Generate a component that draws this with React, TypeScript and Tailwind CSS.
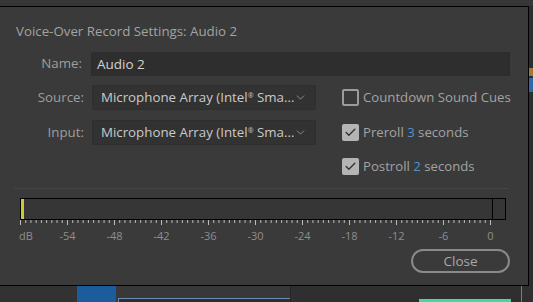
import { ChevronDown, Check } from 'lucide-react'

const font = { fontFamily: '"Open Sans", "Noto Sans", sans-serif' }

const dbLabels = ['dB', '-54', '-48', '-42', '-36', '-30', '-24', '-18', '-12', '-6', '0']

function Dropdown() {
  return (
    <div className="flex h-[25px] w-[224px] items-center justify-between rounded-[2px] border border-[#2e2e2e] bg-[#323232] pl-[8px] pr-[8px]">
      <span className="min-w-0 overflow-hidden whitespace-nowrap text-[13.3px] text-[#c9c9c9]">
        Microphone Array (Intel<sup className="text-[7px]">®</sup> Sma...
      </span>
      <ChevronDown size={13} strokeWidth={1.5} className="shrink-0 text-[#a0a0a0]" />
    </div>
  )
}

function CheckBox({ checked }: { checked: boolean }) {
  if (checked) {
    return (
      <div className="flex h-[17px] w-[17px] shrink-0 items-center justify-center rounded-[2px] bg-[#b4b4b4]">
        <Check size={13} strokeWidth={2.5} className="text-[#333333]" />
      </div>
    )
  }
  return <div className="h-[17px] w-[17px] shrink-0 rounded-[2px] border-2 border-[#9c9c9c]" />
}

function Meter() {
  const ticks = []
  for (let i = 0; i <= 90; i++) {
    const x = 1.5 + i * (470 / 90)
    const major = i % 9 === 0
    ticks.push(
      <line key={i} x1={x} x2={x} y1={0} y2={major ? 5 : 3} stroke="#bdbdbd" strokeWidth={1} />
    )
  }
  return (
    <div className="ml-[20px] flex flex-col">
      <div className="flex h-[22px] w-[486px] border border-black bg-[#363636]">
        <div className="w-[3px] bg-[#c9c93c]" />
        <div className="flex-1" />
        <div className="w-[13px] border-l border-black" />
      </div>
      <svg width="500" height="24" className="-ml-[1px]">
        {ticks}
        {dbLabels.map((l, i) => (
          <text
            key={l}
            x={i === 0 ? 7 : 1.5 + i * 47}
            y={20}
            textAnchor="middle"
            fontSize="11"
            fill="#8e8e8e"
            style={font}
          >
            {l}
          </text>
        ))}
      </svg>
    </div>
  )
}

export default function App() {
  return (
    <div className="flex h-[302px] w-[533px] flex-col overflow-hidden bg-[#2c2c2c]" style={font}>
      <div className="h-[6px] shrink-0 bg-[#363636]" />
      <div className="flex h-[280px] shrink-0">
        {/* dialog */}
        <div className="flex w-[529px] flex-col border-y border-r border-black bg-[#3a3a3a] pl-[16px] pr-[18px] pt-[16px]">
          <div className="h-[17px] whitespace-nowrap text-[13.3px] leading-[17px] text-[#a3a3a3]">
            Voice-Over Record Settings: Audio 2
          </div>

          <div className="mt-[12px] flex items-center">
            <div className="w-[68px] pr-[2px] text-right text-[13.3px] text-[#9e9e9e]">Name:</div>
            <div className="ml-[7px] flex h-[24px] flex-1 items-center rounded-[2px] border border-[#2c2c2c] bg-[#2e2e2e] pl-[5px] text-[13.5px] text-[#d2d2d2]">
              Audio 2
            </div>
          </div>

          <div className="mt-[9px] flex">
            <div className="flex flex-col gap-[10px]">
              <div className="flex items-center">
                <div className="w-[68px] text-right text-[13.3px] text-[#9e9e9e]">Source:</div>
                <div className="ml-[8px]">
                  <Dropdown />
                </div>
              </div>
              <div className="flex items-center">
                <div className="w-[68px] text-right text-[13.3px] text-[#9e9e9e]">Input:</div>
                <div className="ml-[8px]">
                  <Dropdown />
                </div>
              </div>
            </div>

            <div className="ml-[26px] flex flex-col whitespace-nowrap text-[13.2px] text-[#a3a3a3]">
              <div className="flex h-[25px] items-center gap-[4px]">
                <CheckBox checked={false} />
                <span>Countdown Sound Cues</span>
              </div>
              <div className="mt-[10px] flex h-[25px] items-center gap-[4px]">
                <CheckBox checked />
                <span>
                  Preroll <span className="text-[#4f93d6]">3</span> seconds
                </span>
              </div>
              <div className="mt-[9px] flex h-[25px] items-center gap-[4px]">
                <CheckBox checked />
                <span>
                  Postroll <span className="text-[#4f93d6]">2</span> seconds
                </span>
              </div>
            </div>
          </div>

          <div className="-ml-[2px] mt-[9px] h-px w-[494px] bg-[#464646]" />

          <div className="-ml-[16px] mt-[9px]">
            <Meter />
          </div>

          <div className="mt-[5px] flex justify-end">
            <div className="flex h-[24px] w-[99px] items-center justify-center rounded-full border-2 border-[#8a8a8a] text-[13.5px] text-[#a9a9a9]">
              Close
            </div>
          </div>
        </div>
        {/* right edge of the app behind */}
        <div className="flex flex-1 flex-col bg-[#2e2e2e]">
          <div className="mt-[62px] h-[8px] bg-[#a0783a]" />
          <div className="mt-[2px] h-[14px] bg-[#2f6aa8]" />
        </div>
      </div>
      {/* app strip behind the dialog */}
      <div className="flex flex-1">
        <div className="w-[77px] bg-[#323232]" />
        <div className="w-[39px] bg-[#1b5d9c]" />
        <div className="flex w-[174px] flex-col bg-[#383838]">
          <div className="h-[12px]" />
          <div className="ml-[2px] flex-1 border-l border-t border-[#6a8bb2] bg-[#2e2e2e]" />
        </div>
        <div className="w-px bg-[#262626]" />
        <div className="flex w-[128px] flex-col bg-[#2f2f2f]" />
        <div className="flex w-[92px] flex-col">
          <div className="h-[13px] bg-[#2f2f2f]" />
          <div className="flex-1 bg-[#3fd9a4]" />
        </div>
        <div className="w-[10px] bg-[#2f2f2f]" />
        <div className="w-px bg-[#4f86c0]" />
        <div className="flex-1 bg-[#2f2f2f]" />
      </div>
    </div>
  )
}
